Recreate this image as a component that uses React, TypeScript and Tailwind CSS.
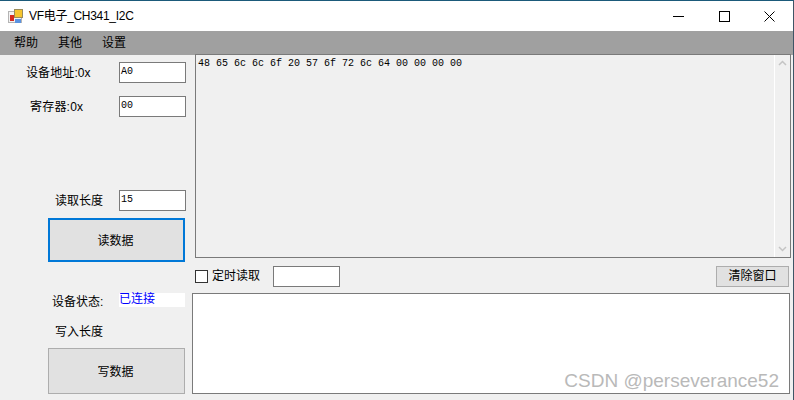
const cjk = "font-['Liberation_Sans','Noto_Sans_CJK_SC',sans-serif]"

function Field({ label, value, labelClass, className }: { label: string; value?: string; labelClass: string; className: string }) {
  return (
    <div className={`flex items-center ${className}`}>
      <span className={`text-[12px] leading-none text-black ${labelClass}`}>{label}</span>
      <div className="ml-auto w-[67px] h-[21px] border border-[#7a7a7a] bg-white font-['Liberation_Mono',monospace] text-[10px] leading-[17px] pl-[1px] text-black">
        {value}
      </div>
    </div>
  )
}

function AppIcon() {
  return (
    <svg width="15" height="15" viewBox="0 0 15 15" shapeRendering="crispEdges">
      <rect x="0.5" y="2.5" width="13" height="11" fill="#f2f2f2" stroke="#b4b4b4" />
      <rect x="2" y="6" width="4" height="6" fill="#d62a1e" />
      <rect x="6.5" y="0.5" width="8" height="8" fill="#f6c52e" stroke="#9a8c5a" />
      <rect x="7" y="10" width="6" height="4" fill="#5b93e0" />
    </svg>
  )
}

export default function App() {
  return (
    <div className={`w-[794px] h-[400px] overflow-hidden flex flex-col bg-[#f0f0f0] border-t border-t-[#1b5a7a] border-r border-r-[#3f5566] ${cjk}`}>
      {/* Title bar */}
      <div className="h-[30px] bg-white flex items-center shrink-0">
        <div className="ml-[8px] w-[15px] h-[15px]">
          <AppIcon />
        </div>
        <span className="ml-[6px] text-[12px] tracking-[-0.3px] text-black">VF电子_CH341_I2C</span>
        <div className="ml-auto flex items-center text-black">
          <div className="w-[46px] flex justify-center">
            <svg width="11" height="11" viewBox="0 0 11 11" fill="none" stroke="currentColor" shapeRendering="crispEdges">
              <path d="M0 5.5 H11" />
            </svg>
          </div>
          <div className="w-[46px] flex justify-center">
            <svg width="11" height="11" viewBox="0 0 11 11" fill="none" stroke="currentColor" shapeRendering="crispEdges">
              <rect x="0.5" y="0.5" width="10" height="10" />
            </svg>
          </div>
          <div className="w-[46px] flex justify-center pr-[1px]">
            <svg width="11" height="11" viewBox="0 0 11 11" fill="none" stroke="currentColor">
              <path d="M0.5 0.5 L10.5 10.5 M10.5 0.5 L0.5 10.5" />
            </svg>
          </div>
        </div>
      </div>

      {/* Menu */}
      <div className="h-[24px] bg-[#a0a0a0] flex items-center gap-[20px] pl-[14px] text-[12px] text-black shrink-0">
        <span>帮助</span>
        <span>其他</span>
        <span>设置</span>
      </div>

      <div className="flex flex-1 min-h-0">
        {/* Left column */}
        <div className="w-[192px] shrink-0 flex flex-col pr-[6px]">
          <Field label="设备地址:0x" value="A0" labelClass="ml-[26px] tracking-[0.1px]" className="mt-[7px]" />
          <Field label="寄存器:0x" value="00" labelClass="ml-[30px] tracking-[0.2px]" className="mt-[13px]" />
          <Field label="读取长度" value="15" labelClass="ml-[55px]" className="mt-[73px]" />
          <button className="mt-[7px] ml-[48px] w-[137px] h-[44px] pt-[2px] pr-[2px] bg-[#e1e1e1] border-2 border-[#0078d7] text-[12px] text-black">
            读数据
          </button>
          <div className="mt-[31px] flex items-start">
            <span className="ml-[52px] mt-[2px] text-[12px] leading-[14px] text-black">设备状态:</span>
            <span className="ml-auto mr-[1px] w-[66px] h-[14px] bg-white text-[12px] leading-[12px] text-[#0000ff]">已连接</span>
          </div>
          <span className="mt-[16px] ml-[55px] text-[12px] leading-[14px] text-black">写入长度</span>
          <button className="mt-[9px] ml-[48px] w-[137px] h-[46px] pt-[2px] pr-[2px] bg-[#e1e1e1] border border-[#adadad] text-[12px] text-black">
            写数据
          </button>
        </div>

        {/* Right column */}
        <div className="flex-1 flex flex-col min-w-0">
          <div className="ml-[3px] mr-[2px] -mt-[1px] h-[204px] border border-[#7a7a7a] bg-[#f0f0f0] flex">
            <div className="flex-1 pl-[2px] pt-[3px] font-['Liberation_Mono',monospace] text-[10px] leading-[12px] text-black whitespace-pre">
              48 65 6c 6c 6f 20 57 6f 72 6c 64 00 00 00 00
            </div>
            <div className="w-[16px] border-l border-white flex flex-col justify-between items-center py-[5px] text-[#c4c4c4]">
              <svg width="9" height="6" viewBox="0 0 9 6" fill="none" stroke="currentColor" strokeWidth="1.5">
                <path d="M1 5 L4.5 1.5 L8 5" />
              </svg>
              <svg width="9" height="6" viewBox="0 0 9 6" fill="none" stroke="currentColor" strokeWidth="1.5">
                <path d="M1 1 L4.5 4.5 L8 1" />
              </svg>
            </div>
          </div>

          <div className="mt-[7px] h-[22px] flex items-center ml-[3px] mr-[4px]">
            <div className="w-[13px] h-[13px] border border-[#333] bg-white shrink-0" />
            <span className="ml-[4px] text-[12px] text-black">定时读取</span>
            <div className="ml-[13px] w-[67px] h-[21px] border border-[#7a7a7a] bg-white" />
            <button className="ml-auto w-[73px] h-[21px] bg-[#e1e1e1] border border-[#adadad] text-[12px] leading-none text-black">
              清除窗口
            </button>
          </div>

          <div className="relative mt-[6px] mr-[3px] h-[101px] border border-[#7a7a7a] bg-white">
            <span className="absolute right-[10px] bottom-[1px] font-['Liberation_Sans',sans-serif] text-[19px] leading-[22px] text-[#b9b9b9]">
              CSDN @perseverance52
            </span>
          </div>
        </div>
      </div>
    </div>
  )
}
